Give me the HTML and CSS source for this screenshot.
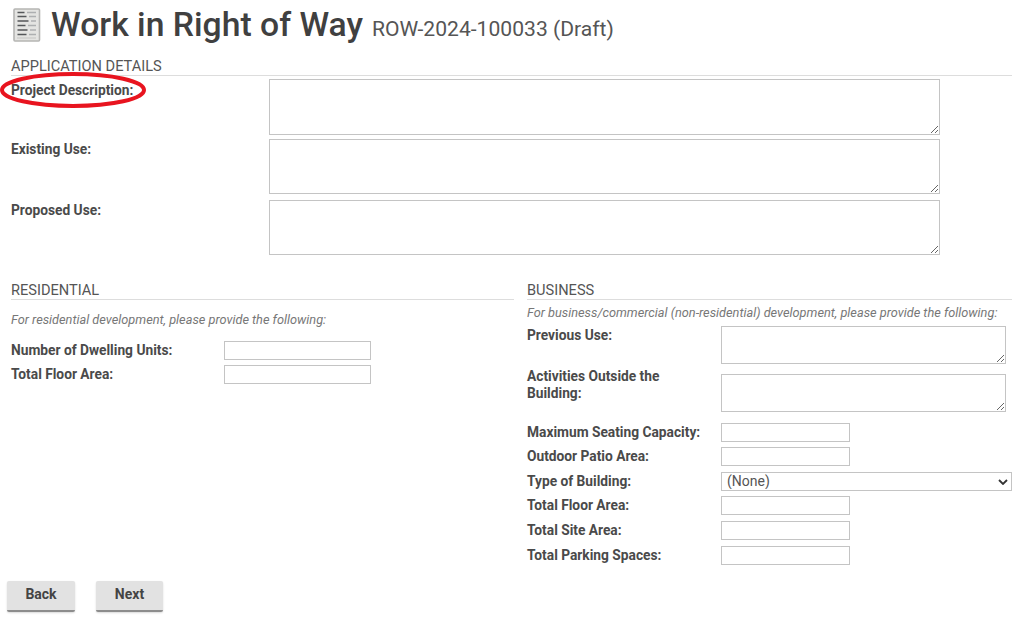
FILE: index.html
```html
<!DOCTYPE html>
<html lang="en">
<head>
<meta charset="utf-8">
<title>Work in Right of Way</title>
<link rel="stylesheet" href="styles.css">
</head>
<body>
<header class="title">
  <svg class="form-icon" width="28" height="34" viewBox="0 0 28 34" aria-hidden="true">
    <rect x="1" y="1" width="25.5" height="32" rx="1" fill="#e4e4e2" stroke="#b5b5b3" stroke-width="1.6"/>
    <path d="M4.500 4.500h7M4.500 8.500h9M4.500 13h11M4.500 17.500h8M4.500 22h10M4.500 26.500h9" stroke="#55575a" stroke-width="1.500"/>
    <path d="M14 4.500h9M16 8.500h7M18 13h5M15 17.500h8M17 22h6M16 26.500h7" stroke="#adafb1" stroke-width="1.500"/>
    <path d="M4 30h19" stroke="#cfcfcd" stroke-width="1.500"/>
  </svg>
  <h1>Work in Right of Way</h1>
  <span class="record">ROW-2024-100033 (Draft)</span>
</header>

<section class="details">
  <h2 class="section-head">APPLICATION DETAILS</h2>
  <div class="detail-row r1"><label>Project Description:</label><textarea></textarea></div>
  <div class="detail-row r2"><label>Existing Use:</label><textarea></textarea></div>
  <div class="detail-row r3"><label>Proposed Use:</label><textarea></textarea></div>
  <svg class="circle" width="150" height="38" viewBox="0 0 150 38" aria-hidden="true">
    <ellipse cx="73" cy="19" rx="71" ry="16" fill="none" stroke="#e8141f" stroke-width="4"/>
  </svg>
</section>

<div class="columns">
  <section class="residential">
    <h2 class="section-head">RESIDENTIAL</h2>
    <p class="hint res-hint">For residential development, please provide the following:</p>
    <div class="res-row"><label>Number of Dwelling Units:</label><input type="text"></div>
    <div class="res-row"><label>Total Floor Area:</label><input type="text"></div>
  </section>

  <section class="business">
    <h2 class="section-head">BUSINESS</h2>
    <p class="hint">For business/commercial (non-residential) development, please provide the following:</p>
    <div class="biz-row ta"><label>Previous Use:</label><textarea></textarea></div>
    <div class="biz-row ta second"><label>Activities Outside the Building:</label><textarea></textarea></div>
    <div class="biz-fields">
      <div class="biz-row"><label>Maximum Seating Capacity:</label><input type="text"></div>
      <div class="biz-row"><label>Outdoor Patio Area:</label><input type="text"></div>
      <div class="biz-row"><label>Type of Building:</label>
        <div class="select-wrap">
          <select><option>(None)</option></select>
          <svg class="chevron" width="10" height="6" viewBox="0 0 10 6" aria-hidden="true"><path d="M1 1l4 4 4-4" fill="none" stroke="#333" stroke-width="1.800"/></svg>
        </div>
      </div>
      <div class="biz-row"><label>Total Floor Area:</label><input type="text"></div>
      <div class="biz-row"><label>Total Site Area:</label><input type="text"></div>
      <div class="biz-row"><label>Total Parking Spaces:</label><input type="text"></div>
    </div>
  </section>
</div>

<div class="actions">
  <button class="btn" type="button">Back</button>
  <button class="btn next" type="button">Next</button>
</div>
</body>
</html>
```
FILE: styles.css
```css
* { box-sizing: border-box; }
html, body { margin: 0; height: 621px; overflow: hidden; }
body {
  background: #fff;
  color: #444;
  font-family: Roboto, "Liberation Sans", sans-serif;
  font-size: 14px;
  padding: 0 12px 0 11px;
}
.title {
  display: flex;
  align-items: center;
  height: 50px;
}
.form-icon { margin: 0 10px 0 2px; flex: none; }
h1 {
  margin: 0;
  font-size: 33.7px;
  font-weight: 500;
  color: #404040;
  line-height: 50px;
}
.record {
  margin-left: 9px;
  font-size: 21.1px;
  color: #555;
  padding-top: 7px;
}
.section-head {
  margin: 0;
  padding-top: 1px;
  font-size: 14.6px;
  font-weight: 400;
  line-height: 17px;
  color: #555;
  border-bottom: 1px solid #ddd;
}
.details { position: relative; padding-top: 7px; }
.detail-row {
  display: grid;
  grid-template-columns: 258px 671px;
}
label { font-weight: 700; color: #4a4a4a; font-size: 13.75px; line-height: 17px; }
.detail-row label { padding-top: 2px; }
.r1 label { padding-top: 3px; }
.r1 { margin-top: 3px; }
.r1 textarea { height: 56px; }
.r2 { margin-top: 4px; }
.r2 textarea { height: 55px; }
.r3 { margin-top: 6px; }
.r3 textarea { height: 55px; }
textarea, input, select {
  display: block;
  border: 1px solid #c4c4c4;
  background: #fff;
  border-radius: 0;
  margin: 0;
  font-family: inherit;
  outline: none;
}
.circle { position: absolute; left: -11px; top: 21px; }
.columns {
  display: grid;
  grid-template-columns: 503px 485px;
  column-gap: 13px;
  margin-top: 26px;
}
.hint {
  margin: 0;
  font-size: 12.75px;
  font-style: italic;
  color: #777;
  line-height: 14px;
}
.res-hint { margin-top: 13px; }
.res-row {
  display: grid;
  grid-template-columns: 213px 147px;
  height: 19px;
  margin-bottom: 5px;
  align-items: center;
}
.res-hint + .res-row { margin-top: 14px; }
.res-row input { height: 19px; }
.business .hint { margin-top: 6px; }
.biz-row {
  display: grid;
  grid-template-columns: 194px auto;
  justify-content: start;
  align-items: center;
  height: 19px;
  margin-bottom: 5.6px;
}
.biz-row input { width: 129px; height: 19px; }
.select-wrap { position: relative; width: 291px; height: 19px; }
.select-wrap select {
  appearance: none;
  width: 100%;
  height: 19px;
  font-size: 14px;
  color: #555;
  padding: 0 0 0 5px;
}
.chevron { position: absolute; right: 4px; top: 7px; pointer-events: none; }
.biz-row.ta { height: 38px; align-items: start; margin-bottom: 0; margin-top: 6px; }
.biz-row.ta label { padding-top: 1px; }
.biz-row.ta textarea { width: 285px; height: 38px; }
.biz-row.ta.second { margin-top: 10px; }
.biz-row.second label { max-width: 170px; padding-top: 0; margin-top: -6px; }
.biz-fields { margin-top: 10.7px; }
.actions {
  display: flex;
  gap: 21px;
  margin: 10.7px 0 0 -4px;
}
.btn {
  width: 68px;
  height: 31px;
  padding: 0 0 2px;
  border: 0;
  border-bottom: 2px solid #8d8d8d;
  border-radius: 2px;
  background: #e2e2e2;
  box-shadow: 0 1px 2px rgba(0,0,0,.15);
  font-family: inherit;
  font-size: 14px;
  font-weight: 700;
  color: #444;
}
.next { width: 67px; }
```
